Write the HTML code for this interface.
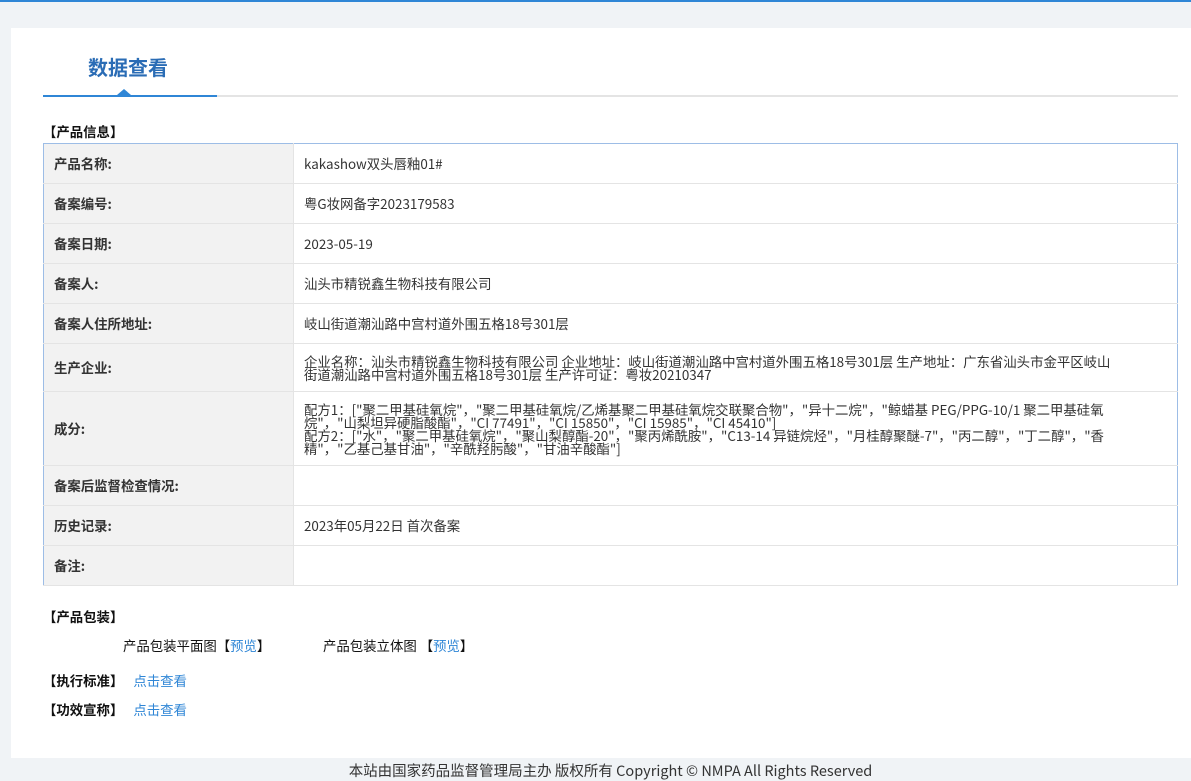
<!DOCTYPE html>
<html><head><meta charset="utf-8"><style>
*{margin:0;padding:0;box-sizing:border-box}
body{width:1191px;height:779px;background:#f0f3f6;font-family:"Noto Sans CJK SC","Liberation Sans",sans-serif;font-size:13.4px;color:#333;position:relative;overflow:hidden}
.topl{position:absolute;left:0;top:0;width:1191px;height:2px;background:#2f86d6}
.panel{position:absolute;left:11px;top:28px;width:1180px;height:730px;background:#fff}
.title{position:absolute;left:77px;top:25px;font-size:20px;line-height:28px;font-weight:bold;color:#2a6cb5}
.line{position:absolute;left:32px;top:67px;width:1135px;height:2px;background:#e4e4e4}
.line b{position:absolute;left:0;top:0;width:174px;height:2px;background:#2f86d6}
.tri{position:absolute;left:106px;top:61px;width:0;height:0;border-left:7px solid transparent;border-right:7px solid transparent;border-bottom:6px solid #2f86d6}
.h{position:absolute;left:32px;font-weight:bold;color:#111;line-height:18px}
table{position:absolute;left:32px;top:115px;width:1135px;border-collapse:collapse;border:1px solid #9dbde6}
td{border-bottom:1px solid #e4e4e4;padding:0 10px;line-height:13px;vertical-align:middle}
td.l{width:250px;background:#f2f2f2;font-weight:bold;color:#333;border-right:1px solid #e4e4e4}
a{color:#2f86d6;text-decoration:none}
.foot{position:absolute;top:762px;left:0;width:1221px;text-align:center;font-size:14.5px;line-height:18px;color:#333}
.t{line-height:18px}
</style></head><body>
<div class="topl"></div>
<div class="panel">
<div class="title">数据查看</div>
<div class="line"><b></b></div><div class="tri"></div>
<div class="h" style="top:94px;">【产品信息】</div>
<table>
<tr style="height:40px"><td class="l">产品名称:</td><td>kakashow双头唇釉01#</td></tr>
<tr style="height:40px"><td class="l">备案编号:</td><td>粤G妆网备字2023179583</td></tr>
<tr style="height:40px"><td class="l">备案日期:</td><td>2023-05-19</td></tr>
<tr style="height:40px"><td class="l">备案人:</td><td>汕头市精锐鑫生物科技有限公司</td></tr>
<tr style="height:40px"><td class="l">备案人住所地址:</td><td>岐山街道潮汕路中宫村道外围五格18号301层</td></tr>
<tr style="height:48px"><td class="l">生产企业:</td><td>企业名称：汕头市精锐鑫生物科技有限公司 企业地址：岐山街道潮汕路中宫村道外围五格18号301层 生产地址：广东省汕头市金平区岐山<br>街道潮汕路中宫村道外围五格18号301层 生产许可证：粤妆20210347</td></tr>
<tr style="height:74px"><td class="l">成分:</td><td>配方1：["聚二甲基硅氧烷"，"聚二甲基硅氧烷/乙烯基聚二甲基硅氧烷交联聚合物"，"异十二烷"，"鲸蜡基 PEG/PPG-10/1 聚二甲基硅氧<br>烷"，"山梨坦异硬脂酸酯"，"CI 77491"，"CI 15850"，"CI 15985"，"CI 45410"]<br>配方2：["水"，"聚二甲基硅氧烷"，"聚山梨醇酯-20"，"聚丙烯酰胺"，"C13-14 异链烷烃"，"月桂醇聚醚-7"，"丙二醇"，"丁二醇"，"香<br>精"，"乙基己基甘油"，"辛酰羟肟酸"，"甘油辛酸酯"]</td></tr>
<tr style="height:40px"><td class="l">备案后监督检查情况:</td><td></td></tr>
<tr style="height:40px"><td class="l">历史记录:</td><td>2023年05月22日 首次备案</td></tr>
<tr style="height:40px"><td class="l">备注:</td><td></td></tr>
</table>
<div class="h" style="top:579px;">【产品包装】</div>
<div class="t" style="position:absolute;left:112px;top:608px;color:#111">产品包装平面图【<a>预览</a>】</div>
<div class="t" style="position:absolute;left:312px;top:608px;color:#111">产品包装立体图 【<a>预览</a>】</div>
<div class="t" style="position:absolute;left:32px;top:643px"><b style="color:#111">【执行标准】</b><a style="margin-left:10px">点击查看</a></div>
<div class="t" style="position:absolute;left:32px;top:672px"><b style="color:#111">【功效宣称】</b><a style="margin-left:10px">点击查看</a></div>
</div>
<div class="foot">本站由国家药品监督管理局主办 版权所有 Copyright © NMPA All Rights Reserved</div>
</body></html>
